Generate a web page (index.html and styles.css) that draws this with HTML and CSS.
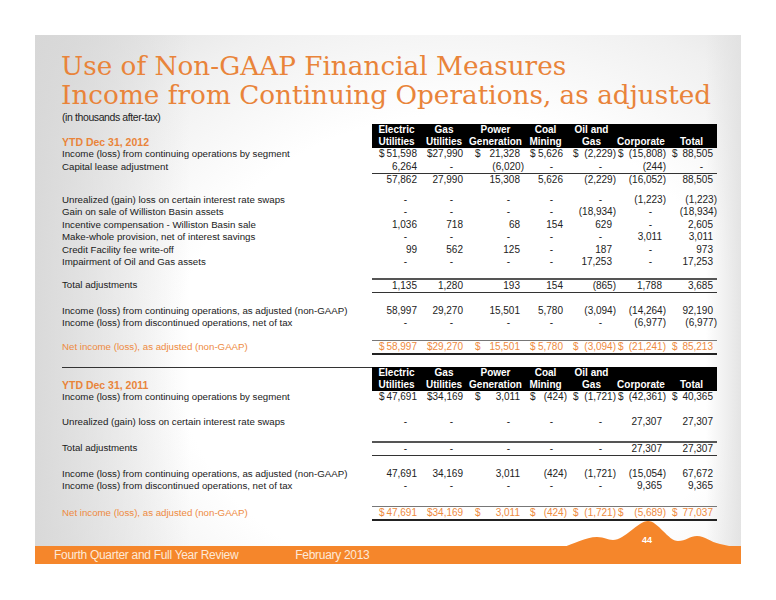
FILE: index.html
```html
<!DOCTYPE html>
<html>
<head>
    <title>Use of Non-GAAP Financial Measures</title>
    <link rel="stylesheet" href="styles.css">
</head>
<body>
    <div class="slide">
        <h1 class="title">Use of Non-GAAP Financial Measures<br>Income from Continuing Operations, as adjusted</h1>
        <div class="subtitle">(in thousands after-tax)</div>

        <table class="fin">
            <colgroup>
                <col class="c-label"><col class="c-elec"><col class="c-gas"><col class="c-pow"><col class="c-coal"><col class="c-oil"><col class="c-corp"><col class="c-tot">
            </colgroup>
            <thead>
                <tr>
                    <th class="period">YTD Dec 31, 2012</th>
                    <th>Electric<br>Utilities</th>
                    <th>Gas<br>Utilities</th>
                    <th>Power<br>Generation</th>
                    <th>Coal<br>Mining</th>
                    <th>Oil and<br>Gas</th>
                    <th><br>Corporate</th>
                    <th><br>Total</th>
                </tr>
            </thead>
            <tbody>
                <tr>
                    <td class="lbl">Income (loss) from continuing operations by segment</td>
                    <td class="p"><span class="d">$</span>51,598</td>
                    <td class="p"><span class="d">$</span>27,990</td>
                    <td class="p"><span class="d">$</span>21,328</td>
                    <td class="p"><span class="d">$</span>5,626</td>
                    <td class="n"><span class="d">$</span>(2,229)</td>
                    <td class="n"><span class="d">$</span>(15,808)</td>
                    <td class="p"><span class="d">$</span>88,505</td>
                </tr>
                <tr>
                    <td class="lbl">Capital lease adjustment</td>
                    <td class="p">6,264</td>
                    <td class="z">-</td>
                    <td class="n">(6,020)</td>
                    <td class="z">-</td>
                    <td class="z">-</td>
                    <td class="n">(244)</td>
                    <td class="z">-</td>
                </tr>
                <tr class="sub">
                    <td class="lbl"></td>
                    <td class="p">57,862</td>
                    <td class="p">27,990</td>
                    <td class="p">15,308</td>
                    <td class="p">5,626</td>
                    <td class="n">(2,229)</td>
                    <td class="n">(16,052)</td>
                    <td class="p">88,505</td>
                </tr>
                <tr class="gap g8"><td colspan="8"></td></tr>
                <tr>
                    <td class="lbl">Unrealized (gain) loss on certain interest rate swaps</td>
                    <td class="z">-</td><td class="z">-</td><td class="z">-</td><td class="z">-</td><td class="z">-</td>
                    <td class="n">(1,223)</td>
                    <td class="n">(1,223)</td>
                </tr>
                <tr>
                    <td class="lbl">Gain on sale of Williston Basin assets</td>
                    <td class="z">-</td><td class="z">-</td><td class="z">-</td><td class="z">-</td>
                    <td class="n">(18,934)</td>
                    <td class="z">-</td>
                    <td class="n">(18,934)</td>
                </tr>
                <tr>
                    <td class="lbl">Incentive compensation - Williston Basin sale</td>
                    <td class="p">1,036</td>
                    <td class="p">718</td>
                    <td class="p">68</td>
                    <td class="p">154</td>
                    <td class="p">629</td>
                    <td class="z">-</td>
                    <td class="p">2,605</td>
                </tr>
                <tr>
                    <td class="lbl">Make-whole provision, net of interest savings</td>
                    <td class="z">-</td><td class="z">-</td><td class="z">-</td><td class="z">-</td><td class="z">-</td>
                    <td class="p">3,011</td>
                    <td class="p">3,011</td>
                </tr>
                <tr>
                    <td class="lbl">Credit Facility fee write-off</td>
                    <td class="p">99</td>
                    <td class="p">562</td>
                    <td class="p">125</td>
                    <td class="z">-</td>
                    <td class="p">187</td>
                    <td class="z">-</td>
                    <td class="p">973</td>
                </tr>
                <tr>
                    <td class="lbl">Impairment of Oil and Gas assets</td>
                    <td class="z">-</td><td class="z">-</td><td class="z">-</td><td class="z">-</td>
                    <td class="p">17,253</td>
                    <td class="z">-</td>
                    <td class="p">17,253</td>
                </tr>
                <tr class="gap g9"><td colspan="8"></td></tr>
                <tr class="tot">
                    <td class="lbl">Total adjustments</td>
                    <td class="p">1,135</td>
                    <td class="p">1,280</td>
                    <td class="p">193</td>
                    <td class="p">154</td>
                    <td class="n">(865)</td>
                    <td class="p">1,788</td>
                    <td class="p">3,685</td>
                </tr>
                <tr class="gap g12"><td colspan="8"></td></tr>
                <tr>
                    <td class="lbl">Income (loss) from continuing operations, as adjusted (non-GAAP)</td>
                    <td class="p">58,997</td>
                    <td class="p">29,270</td>
                    <td class="p">15,501</td>
                    <td class="p">5,780</td>
                    <td class="n">(3,094)</td>
                    <td class="n">(14,264)</td>
                    <td class="p">92,190</td>
                </tr>
                <tr>
                    <td class="lbl">Income (loss) from discontinued operations, net of tax</td>
                    <td class="z">-</td><td class="z">-</td><td class="z">-</td><td class="z">-</td><td class="z">-</td>
                    <td class="n">(6,977)</td>
                    <td class="n">(6,977)</td>
                </tr>
                <tr class="gap g10"><td colspan="8"></td></tr>
                <tr class="net">
                    <td class="lbl">Net income (loss), as adjusted (non-GAAP)</td>
                    <td class="p"><span class="d">$</span>58,997</td>
                    <td class="p"><span class="d">$</span>29,270</td>
                    <td class="p"><span class="d">$</span>15,501</td>
                    <td class="p"><span class="d">$</span>5,780</td>
                    <td class="n"><span class="d">$</span>(3,094)</td>
                    <td class="n"><span class="d">$</span>(21,241)</td>
                    <td class="p"><span class="d">$</span>85,213</td>
                </tr>
            </tbody>
        </table>

        <table class="fin second">
            <colgroup>
                <col class="c-label"><col class="c-elec"><col class="c-gas"><col class="c-pow"><col class="c-coal"><col class="c-oil"><col class="c-corp"><col class="c-tot">
            </colgroup>
            <thead>
                <tr>
                    <th class="period">YTD Dec 31, 2011</th>
                    <th>Electric<br>Utilities</th>
                    <th>Gas<br>Utilities</th>
                    <th>Power<br>Generation</th>
                    <th>Coal<br>Mining</th>
                    <th>Oil and<br>Gas</th>
                    <th><br>Corporate</th>
                    <th><br>Total</th>
                </tr>
            </thead>
            <tbody>
                <tr>
                    <td class="lbl">Income (loss) from continuing operations by segment</td>
                    <td class="p"><span class="d">$</span>47,691</td>
                    <td class="p"><span class="d">$</span>34,169</td>
                    <td class="p"><span class="d">$</span>3,011</td>
                    <td class="n"><span class="d">$</span>(424)</td>
                    <td class="n"><span class="d">$</span>(1,721)</td>
                    <td class="n"><span class="d">$</span>(42,361)</td>
                    <td class="p"><span class="d">$</span>40,365</td>
                </tr>
                <tr class="gap g13"><td colspan="8"></td></tr>
                <tr>
                    <td class="lbl">Unrealized (gain) loss on certain interest rate swaps</td>
                    <td class="z">-</td><td class="z">-</td><td class="z">-</td><td class="z">-</td><td class="z">-</td>
                    <td class="p">27,307</td>
                    <td class="p">27,307</td>
                </tr>
                <tr class="gap g12"><td colspan="8"></td></tr>
                <tr class="tot">
                    <td class="lbl">Total adjustments</td>
                    <td class="z">-</td><td class="z">-</td><td class="z">-</td><td class="z">-</td><td class="z">-</td>
                    <td class="p">27,307</td>
                    <td class="p">27,307</td>
                </tr>
                <tr class="gap g12"><td colspan="8"></td></tr>
                <tr>
                    <td class="lbl">Income (loss) from continuing operations, as adjusted (non-GAAP)</td>
                    <td class="p">47,691</td>
                    <td class="p">34,169</td>
                    <td class="p">3,011</td>
                    <td class="n">(424)</td>
                    <td class="n">(1,721)</td>
                    <td class="n">(15,054)</td>
                    <td class="p">67,672</td>
                </tr>
                <tr>
                    <td class="lbl">Income (loss) from discontinued operations, net of tax</td>
                    <td class="z">-</td><td class="z">-</td><td class="z">-</td><td class="z">-</td><td class="z">-</td>
                    <td class="p">9,365</td>
                    <td class="p">9,365</td>
                </tr>
                <tr class="gap g13"><td colspan="8"></td></tr>
                <tr class="net">
                    <td class="lbl">Net income (loss), as adjusted (non-GAAP)</td>
                    <td class="p"><span class="d">$</span>47,691</td>
                    <td class="p"><span class="d">$</span>34,169</td>
                    <td class="p"><span class="d">$</span>3,011</td>
                    <td class="n"><span class="d">$</span>(424)</td>
                    <td class="n"><span class="d">$</span>(1,721)</td>
                    <td class="n"><span class="d">$</span>(5,689)</td>
                    <td class="p"><span class="d">$</span>77,037</td>
                </tr>
            </tbody>
        </table>

        <div class="footer">
            <svg class="ridge" width="181" height="46" viewBox="0 0 181 46">
                <path d="M0,30 C15,26 25,19 37,19 C45,19 47,22 53,22 C65,22 78,3 88,3 C98,3 108,23 118,23 C126,23 130,18 137,18 C145,18 150,24 160,26 C168,28 175,29 181,30 L181,46 L0,46 Z" fill="#f5862b"/>
            </svg>
            <span class="page-no">44</span>
            <span class="foot-text">Fourth Quarter and Full Year Review</span>
            <span class="foot-text foot-date">February 2013</span>
        </div>
    </div>
</body>
</html>
```

FILE: styles.css
```css
* {
    margin: 0;
    padding: 0;
    box-sizing: border-box;
}

body {
    background: #fff;
    font-family: "Liberation Sans", Arial, sans-serif;
    color: #1a1a1a;
}

.slide {
    position: relative;
    display: flex;
    flex-direction: column;
    width: 706px;
    height: 529px;
    margin: 35px 0 0 35px;
    padding: 17px 0 0 26px;
    background:
        linear-gradient(90deg, rgba(215, 215, 215, 0.9) 0%, rgba(240, 240, 240, 0) 22%, rgba(255, 255, 255, 0) 95%, rgba(225, 225, 225, 0.9) 100%),
        radial-gradient(ellipse 80% 90% at 60% 60%, #ffffff 50%, #f0f0f0 75%, #dadada 100%);
}

.title {
    font-family: "DejaVu Serif", serif;
    font-weight: normal;
    font-size: 26.3px;
    line-height: 29px;
    color: #e9843a;
}

.subtitle {
    font-size: 10.5px;
    line-height: 12px;
    letter-spacing: -0.4px;
    color: #222;
    margin: 1px 0 1px 1px;
}

.fin {
    table-layout: fixed;
    border-collapse: separate;
    border-spacing: 0;
    width: 655px;
    font-size: 10px;
    line-height: 12px;
    margin-left: 1px;
}

.c-label { width: 310px; }
.c-elec { width: 49px; }
.c-gas { width: 46px; }
.c-pow { width: 57px; }
.c-coal { width: 43px; }
.c-oil { width: 49px; }
.c-corp { width: 50px; }
.c-tot { width: 51px; }

.fin th {
    background: #000;
    color: #fff;
    font-weight: bold;
    font-size: 10px;
    line-height: 12px;
    height: 24px;
    text-align: center;
    vertical-align: bottom;
    white-space: nowrap;
}

.fin th.period {
    background: transparent;
    color: #e9843a;
    text-align: left;
    font-size: 10.5px;
}

.fin tbody tr {
    height: 12.5px;
}

.fin td {
    white-space: nowrap;
    text-align: right;
    color: #222;
}

.fin td.lbl {
    text-align: left;
    color: #1a1a1a;
    font-size: 9.7px;
}

.fin td.p { padding-right: 4px; }
.fin td.n { padding-right: 0; }
.fin td.z { padding-right: 14px; }

.d {
    float: left;
    margin-left: 6px;
}

.fin td:nth-child(2) .d { margin-left: 7px; }
.fin td:nth-child(4) .d { margin-left: 8px; }
.fin td:nth-child(7) .d { margin-left: 2px; }

.fin tr.gap td { padding: 0; }
.fin tr.g8 { height: 7.5px; }
.fin tr.g9 { height: 9px; }
.fin tr.g10 { height: 10px; }
.fin tr.g12 { height: 12px; }
.fin tr.g13 { height: 13px; }

.fin tr.sub td:not(.lbl) {
    border-top: 1px solid #333;
}

.fin tr.tot td:not(.lbl) {
    border-top: 2px solid #555;
    border-bottom: 1px solid #333;
}

.fin tr.net td,
.fin tr.net td.lbl {
    color: #ee8a3e;
}

.fin tr.net td:not(.lbl) {
    border-top: 1px solid #777;
    border-bottom: 2px solid #222;
}

.second {
    margin-top: 12px;
}

.second th.period {
    border-top: 1px solid #333;
}

.footer {
    position: relative;
    display: flex;
    align-items: center;
    height: 18px;
    margin: auto 0 0 -26px;
    padding-left: 19px;
    background: #f5862b;
}

.ridge {
    position: absolute;
    display: block;
    left: 525px;
    top: -28px;
    width: 181px;
    height: 46px;
}

.page-no {
    position: absolute;
    left: 604px;
    top: -11px;
    width: 16px;
    text-align: center;
    font-size: 9px;
    font-weight: bold;
    color: #fff;
}

.foot-text {
    position: relative;
    font-size: 12px;
    letter-spacing: -0.3px;
    color: #fde9d8;
}

.foot-date {
    margin-left: 57px;
}
```
